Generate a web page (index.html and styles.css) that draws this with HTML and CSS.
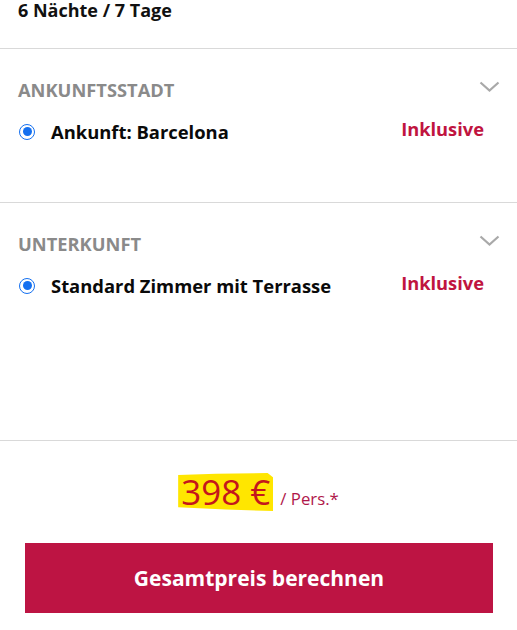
FILE: index.html
```html
<!DOCTYPE html>
<html lang="de">
<head>
<meta charset="utf-8">
<title>Reise</title>
<link rel="stylesheet" href="styles.css">
</head>
<body>
<div class="page">
  <div class="duration">6 Nächte / 7 Tage</div>

  <section class="group group-city">
    <div class="group-head">
      <span class="group-title">ANKUNFTSSTADT</span>
      <svg class="chevron" width="21" height="12" viewBox="0 0 21 12"><path d="M1.5 1.5 L10.5 9.5 L19.5 1.5" fill="none" stroke="#a9a9a9" stroke-width="2.2"/></svg>
    </div>
    <div class="option">
      <span class="radio"><span class="dot"></span></span>
      <span class="option-label">Ankunft: Barcelona</span>
      <span class="included">Inklusive</span>
    </div>
  </section>

  <section class="group group-stay">
    <div class="group-head">
      <span class="group-title">UNTERKUNFT</span>
      <svg class="chevron" width="21" height="12" viewBox="0 0 21 12"><path d="M1.5 1.5 L10.5 9.5 L19.5 1.5" fill="none" stroke="#a9a9a9" stroke-width="2.2"/></svg>
    </div>
    <div class="option">
      <span class="radio"><span class="dot"></span></span>
      <span class="option-label">Standard Zimmer mit Terrasse</span>
      <span class="included">Inklusive</span>
    </div>
  </section>

  <div class="summary">
    <div class="price-line">
      <span class="price">398 €</span>
      <span class="per">/ Pers.*</span>
    </div>
    <button class="cta">Gesamtpreis berechnen</button>
  </div>
</div>
</body>
</html>
```

FILE: styles.css
```css
html, body {
  margin: 0;
  padding: 0;
  background: #fff;
}
body {
  font-family: "Open Sans", Arial, sans-serif;
  color: #111;
  width: 517px;
  height: 630px;
  overflow: hidden;
}
.page {
  display: flex;
  flex-direction: column;
}
.duration {
  height: 49px;
  box-sizing: border-box;
  padding: 0 18px;
  font-size: 18px;
  font-weight: 700;
  line-height: 20px;
  border-bottom: 1px solid #d9d9d9;
}
.group {
  padding: 0 18px 0 18px;
  border-bottom: 1px solid #d9d9d9;
  box-sizing: border-box;
}
.group-city { height: 154px; }
.group-stay { height: 238px; }
.group-head {
  display: flex;
  justify-content: space-between;
  align-items: center;
  margin-top: 29px;
  height: 22px;
}
.group-title {
  color: #8a8a8a;
  font-size: 18.3px;
  font-weight: 700;
}
.chevron {
  margin-right: -1px;
  margin-top: -4px;
}
.option {
  display: flex;
  align-items: center;
  margin-top: 20px;
  height: 22px;
}
.radio {
  width: 16px;
  height: 16px;
  border-radius: 50%;
  border: 1.6px solid #1470f0;
  box-sizing: border-box;
  display: flex;
  align-items: center;
  justify-content: center;
  margin-left: 1px;
  margin-top: 1px;
  flex: none;
}
.dot {
  width: 9px;
  height: 9px;
  border-radius: 50%;
  background: #1470f0;
}
.option-label {
  font-size: 18.4px;
  font-weight: 700;
  color: #0a0a0a;
  margin-left: 16px;
  flex: 1;
}
.included {
  color: #c0143f;
  font-size: 18.3px;
  font-weight: 700;
  margin-top: -6px;
  margin-right: 15px;
}
.summary {
  display: flex;
  flex-direction: column;
  align-items: stretch;
}
.price-line {
  display: flex;
  justify-content: center;
  align-items: baseline;
  margin-top: 32px;
  height: 38px;
}
.price {
  background: #ffe600;
  color: #c4161c;
  font-size: 35px;
  line-height: 38px;
  padding: 0 3px;
  clip-path: polygon(0 5%, 40% 2%, 94% 0, 100% 12%, 100% 100%, 50% 96%, 0 90%);
}
.per {
  color: #b0174a;
  font-size: 16.8px;
  margin-left: 7px;
}
.cta {
  margin: 32px 24px 0 25px;
  height: 70px;
  border: 0;
  background: #bd1443;
  color: #fff;
  font-family: inherit;
  font-size: 21px;
  font-weight: 700;
}
```
